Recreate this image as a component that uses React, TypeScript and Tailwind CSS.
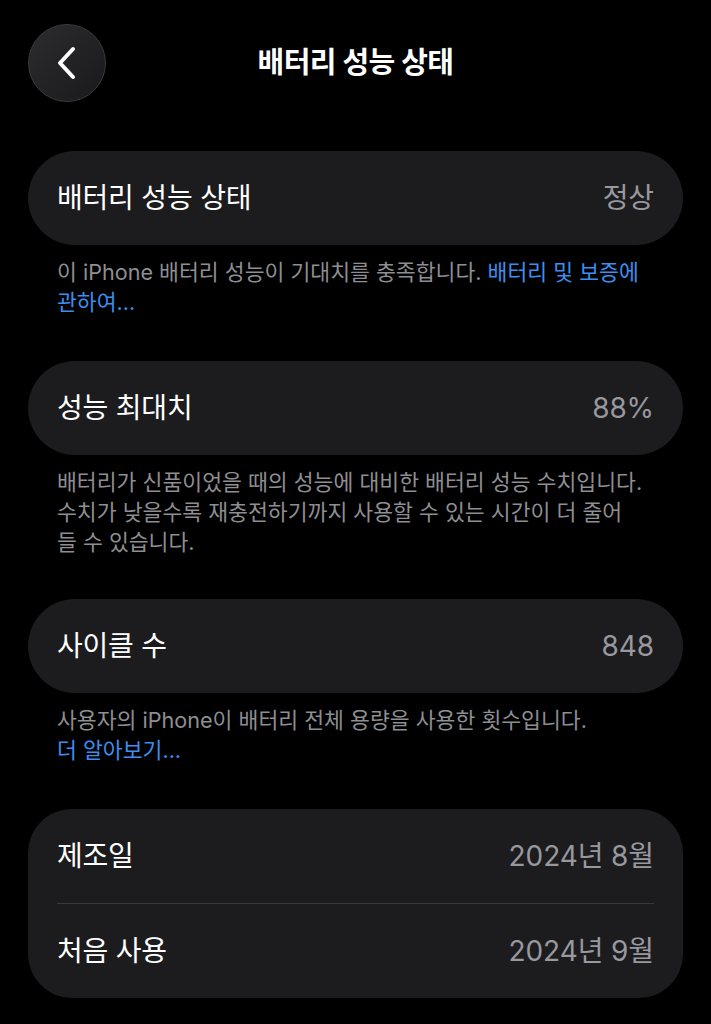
import React from 'react';

const font = { fontFamily: 'Inter, "Noto Sans CJK KR", "Noto Sans", sans-serif' };

function Row({ label, value }: { label: string; value: string }) {
  return (
    <div className="flex h-[94px] items-center justify-between px-[29px]">
      <span className="text-[28px] tracking-[-0.2px] text-white">{label}</span>
      <span className="text-[28px] tracking-[-0.1px] text-[#98989e]">{value}</span>
    </div>
  );
}

function Pill({ label, value }: { label: string; value: string }) {
  return (
    <div className="rounded-full bg-[#1c1c1e]">
      <Row label={label} value={value} />
    </div>
  );
}

function Footer({ children }: { children: React.ReactNode }) {
  return (
    <p className="mt-[12px] px-[29px] text-[21.6px] leading-[30px] text-[#8e8e93]">
      {children}
    </p>
  );
}

export default function App() {
  return (
    <div className="min-h-screen w-full bg-black px-[28px] pt-[24px]" style={font}>
      <div className="relative flex h-[78px] items-center justify-center">
        <button className="absolute left-0 top-0 flex h-[78px] w-[78px] items-center justify-center rounded-full border border-[#3a3a3c] bg-gradient-to-br from-[#2c2c2e] to-[#1a1a1c]">
          <svg width="28" height="36" viewBox="0 0 28 36" fill="none">
            <path d="M20 4 L7 18 L20 32" stroke="white" strokeWidth="4" strokeLinecap="round" strokeLinejoin="round" />
          </svg>
        </button>
        <h1 className="text-[29px] font-bold tracking-[-0.5px] text-white">배터리 성능 상태</h1>
      </div>

      <div className="mt-[49px]">
        <Pill label="배터리 성능 상태" value="정상" />
        <Footer>
          이 iPhone 배터리 성능이 기대치를 충족합니다. <span className="text-[#3b8ff0]">배터리 및 보증에</span>
          <br />
          <span className="text-[#3b8ff0]">관하여...</span>
        </Footer>
      </div>

      <div className="mt-[44px]">
        <Pill label="성능 최대치" value="88%" />
        <Footer>
          배터리가 신품이었을 때의 성능에 대비한 배터리 성능 수치입니다.
          <br />
          수치가 낮을수록 재충전하기까지 사용할 수 있는 시간이 더 줄어
          <br />
          들 수 있습니다.
        </Footer>
      </div>

      <div className="mt-[42px]">
        <Pill label="사이클 수" value="848" />
        <Footer>
          사용자의 iPhone이 배터리 전체 용량을 사용한 횟수입니다.
          <br />
          <span className="text-[#3b8ff0]">더 알아보기...</span>
        </Footer>
      </div>

      <div className="mt-[44px] rounded-[44px] bg-[#1c1c1e]">
        <Row label="제조일" value="2024년 8월" />
        <div className="mx-[29px] h-px bg-[#38383a]" />
        <Row label="처음 사용" value="2024년 9월" />
      </div>
    </div>
  );
}
